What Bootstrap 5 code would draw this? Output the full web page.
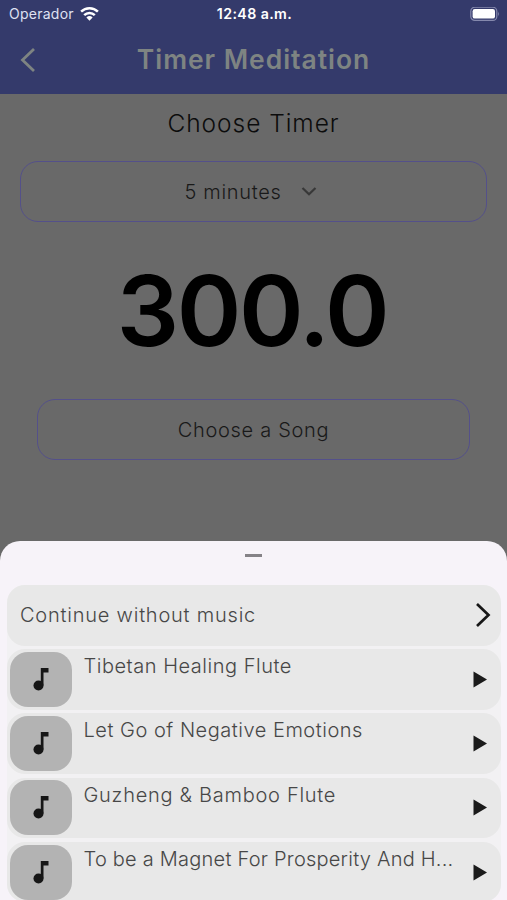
<!DOCTYPE html>
<html lang="en">
<head>
<meta charset="utf-8">
<meta name="viewport" content="width=device-width, initial-scale=1">
<title>Timer Meditation</title>
<link href="https://cdn.jsdelivr.net/npm/bootstrap@5.3.0/dist/css/bootstrap.min.css" rel="stylesheet">
<style>
body{font-family:Inter,"Open Sans",sans-serif;background:#696969;color:#151515;font-weight:300}
.screen{height:900px}
.top-area{height:94px;background:#343a6b}
.status-line{height:28px;padding:0 7px 0 9px;color:#fff;display:grid;grid-template-columns:1fr auto 1fr}
.carrier{font-size:14px;line-height:26px;font-weight:400;color:#dfe1f2;letter-spacing:.25px;margin-right:6px}
.clock{font-size:14.2px;font-weight:600;letter-spacing:.4px}
.title-line{height:63px;display:grid;grid-template-columns:56px 1fr 56px}
.title-text{font-size:26.5px;font-weight:600;color:#7e8482;letter-spacing:.95px;padding-top:1px}
.sub-title{font-size:24.5px;height:59px;letter-spacing:.95px;color:#0c0c0c}
.field{height:61px;border:1.5px solid #54508a;border-radius:18px;font-size:20px;letter-spacing:.7px;color:#191919;padding-top:1px}
.field-wrap{padding:8px 4px 0}
.minutes{padding-right:3px}
.song-wrap{padding:0 37px}
.counter{height:177px;font-size:98px;font-weight:600;color:#000;line-height:1;letter-spacing:-2.3px;padding-right:3px}
.sheet{height:359.5px;background:#f7f3f9;border-radius:20px 20px 0 0}
.grip{width:17px;height:3px;background:#858287;margin-top:13.5px}
.songs{margin:28px 6px 0 7px;background:#f2f1f3;border-radius:18px;gap:3.5px}
.song{height:60.7px;background:#e8e8e8;border-radius:18px;font-size:20px;color:#474747}
.no-music{padding:0 8px 0 13px;letter-spacing:.78px}
.thumb{width:61.5px;height:55px;border-radius:18px;background:#b3b3b3;margin:0 12px 0 3px}
.song-name{letter-spacing:.52px;line-height:24px;margin-top:5px}
.spaced{letter-spacing:.72px}
.tight{letter-spacing:.23px}
.play{margin-right:14px}
</style>
</head>
<body>
<div class="screen d-flex flex-column overflow-hidden">
  <header class="top-area flex-shrink-0">
    <div class="status-line align-items-center">
      <div class="d-flex align-items-center"><span class="carrier">Operador</span>
        <svg width="20" height="15" viewBox="0 0 20 15" fill="none" stroke="#fff"><path d="M1.100 4.700a12 12 0 0 1 16.800 0M4.200 8.100a7.600 7.600 0 0 1 10.600 0" stroke-width="2.5"/><path d="M6.400 10.500a4.500 4.500 0 0 1 6.200 0L9.500 13.700z" fill="#fff" stroke="none"/></svg>
      </div>
      <span class="clock">12:48 a.m.</span>
      <svg class="ms-auto" width="30" height="15" viewBox="0 0 30 15"><rect x=".8" y=".2" width="26" height="13.2" rx="4" fill="none" stroke="#8589ad" stroke-width="1.2"/><rect x="2.6" y="2" width="22.4" height="9.600" rx="2.2" fill="#fff"/><path d="M28.200 4.400q1.800 2.400 0 4.800z" fill="#8589ad"/></svg>
    </div>
    <div class="title-line align-items-center">
      <svg width="56" height="30" viewBox="0 0 56 30" fill="none" stroke="#7e8482" stroke-width="2.8"><path d="M34 4 22.500 15 34 26"/></svg>
      <div class="title-text text-center">Timer Meditation</div>
    </div>
  </header>
  <main class="flex-grow-1 d-flex flex-column">
    <div class="sub-title d-flex align-items-center justify-content-center">Choose Timer</div>
    <div class="field-wrap"><div class="field minutes d-flex align-items-center justify-content-center mx-3"><span>5 minutes</span>
      <svg class="ms-3" width="22" height="20" viewBox="0 0 22 20" fill="none" stroke="#383838" stroke-width="2.2"><path d="m4.500 6 6.500 6.300L17.500 6"/></svg></div></div>
    <div class="counter d-flex align-items-center justify-content-center">300.0</div>
    <div class="song-wrap"><div class="field d-flex align-items-center justify-content-center">Choose a Song</div></div>
  </main>
  <section class="sheet flex-shrink-0 d-flex flex-column">
    <div class="grip mx-auto flex-shrink-0"></div>
    <div class="songs d-flex flex-column flex-shrink-0">
      <div class="song no-music flex-shrink-0 d-flex align-items-center justify-content-between"><span>Continue without music</span>
        <svg width="20" height="28" viewBox="0 0 20 28" fill="none" stroke="#171717" stroke-width="2.7"><path d="M4 3 15.500 14 4 25"/></svg></div>
      <div class="song flex-shrink-0 d-flex align-items-center"><div class="thumb d-flex align-items-center justify-content-center"><svg width="16" height="23" viewBox="0 0 16 23" fill="#161616"><circle cx="5.500" cy="17.500" r="5"/><path d="M7.800 0H15.500v4.500H10.500V17.500H7.800z"/></svg></div><div class="song-name align-self-start">Tibetan Healing Flute</div><svg class="play ms-auto" width="14" height="17" viewBox="0 0 14 17" fill="#1b1b1b"><path d="M.5 .5 14 8.500 .5 16.500z"/></svg></div>
      <div class="song flex-shrink-0 d-flex align-items-center"><div class="thumb d-flex align-items-center justify-content-center"><svg width="16" height="23" viewBox="0 0 16 23" fill="#161616"><circle cx="5.500" cy="17.500" r="5"/><path d="M7.800 0H15.500v4.500H10.500V17.500H7.800z"/></svg></div><div class="song-name align-self-start">Let Go of Negative Emotions</div><svg class="play ms-auto" width="14" height="17" viewBox="0 0 14 17" fill="#1b1b1b"><path d="M.5 .5 14 8.500 .5 16.500z"/></svg></div>
      <div class="song flex-shrink-0 d-flex align-items-center"><div class="thumb d-flex align-items-center justify-content-center"><svg width="16" height="23" viewBox="0 0 16 23" fill="#161616"><circle cx="5.500" cy="17.500" r="5"/><path d="M7.800 0H15.500v4.500H10.500V17.500H7.800z"/></svg></div><div class="song-name spaced align-self-start">Guzheng &amp; Bamboo Flute</div><svg class="play ms-auto" width="14" height="17" viewBox="0 0 14 17" fill="#1b1b1b"><path d="M.5 .5 14 8.500 .5 16.500z"/></svg></div>
      <div class="song flex-shrink-0 d-flex align-items-center"><div class="thumb d-flex align-items-center justify-content-center"><svg width="16" height="23" viewBox="0 0 16 23" fill="#161616"><circle cx="5.500" cy="17.500" r="5"/><path d="M7.800 0H15.500v4.500H10.500V17.500H7.800z"/></svg></div><div class="song-name tight align-self-start">To be a Magnet For Prosperity And H...</div><svg class="play ms-auto" width="14" height="17" viewBox="0 0 14 17" fill="#1b1b1b"><path d="M.5 .5 14 8.500 .5 16.500z"/></svg></div>
    </div>
  </section>
</div>
<script src="https://cdn.jsdelivr.net/npm/bootstrap@5.3.0/dist/js/bootstrap.bundle.min.js"></script>
</body>
</html>
